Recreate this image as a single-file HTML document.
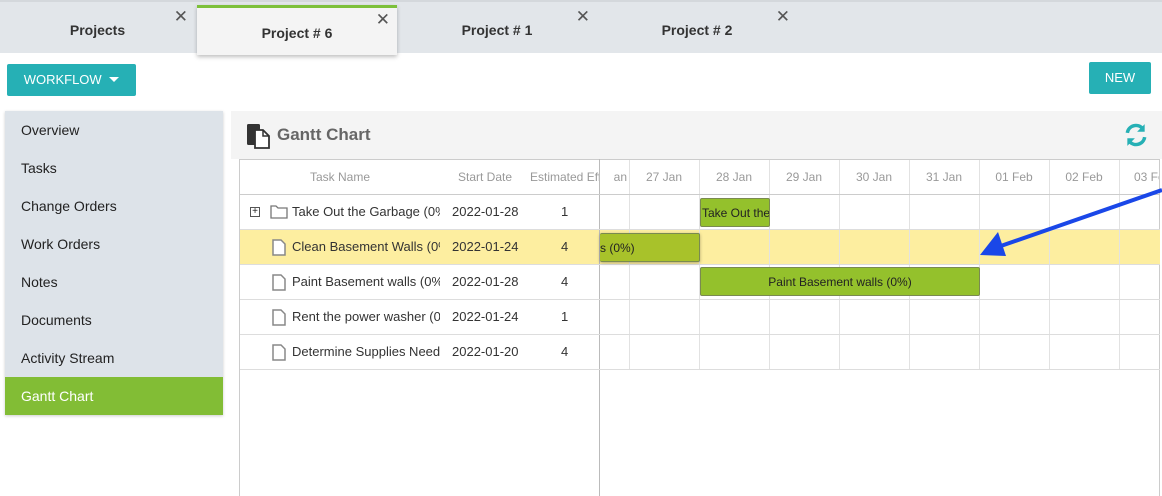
<!DOCTYPE html>
<html><head><meta charset="utf-8"><style>
*{box-sizing:border-box;margin:0;padding:0}
body{width:1162px;height:496px;overflow:hidden;background:#fff;font-family:"Liberation Sans",Arial,sans-serif;position:relative;color:#222}
.abs{position:absolute}
.tabs{left:0;top:0;width:1162px;height:53px;background:#e2e6ea;border-top:2px solid #d4d8dc}
.tab{position:absolute;top:0;height:53px;width:200px;text-align:center;font-size:14px;font-weight:bold;line-height:56px;color:#333}
.x{position:absolute;font-size:17px;font-weight:normal;color:#555;line-height:20px;top:5px}
.act{background:#f4f4f4;border-top:3px solid #7cc03a;top:3px;height:50px;box-shadow:0 2px 4px rgba(0,0,0,.25);line-height:50px}
.btn{background:#26b0b5;color:#fff;font-size:13px;text-align:center;border-radius:2px}
.side{left:5px;top:111px;width:218px;height:304px;background:#dde3e9;box-shadow:0 1px 3px rgba(0,0,0,.2)}
.side div{height:38px;line-height:38px;padding-left:16px;font-size:14px;color:#222}
.hl{position:absolute;height:1px;background:#ddd}
.vl{position:absolute;width:1px;background:#e2e2e2}
.hd{position:absolute;top:159px;height:35px;line-height:36px;font-size:12px;color:#999;text-align:center}
.cell{position:absolute;height:35px;line-height:36px;font-size:13px;color:#333;white-space:nowrap;overflow:hidden}
.bar{position:absolute;height:29px;line-height:29px;font-size:12px;color:#222;border:1px solid #7a8a50;border-radius:2px;text-align:center;white-space:nowrap;overflow:hidden}
.doc{position:absolute;left:272px}
</style></head><body>
<div class="abs tabs">
 <div class="tab" style="left:0;width:195px">Projects<span class="x" style="right:7px">✕</span></div>
 <div class="tab act" style="left:197px">Project # 6<span class="x" style="right:7px;top:2px">✕</span></div>
 <div class="tab" style="left:397px">Project # 1<span class="x" style="right:7px">✕</span></div>
 <div class="tab" style="left:597px">Project # 2<span class="x" style="right:7px">✕</span></div>
</div>
<div class="abs btn" style="left:7px;top:64px;width:129px;height:32px;line-height:32px">WORKFLOW <span style="display:inline-block;border:5px solid transparent;border-top:5px solid #fff;vertical-align:-3px;margin-left:4px"></span></div>
<div class="abs btn" style="left:1089px;top:62px;width:62px;height:32px;line-height:32px">NEW</div>
<div class="abs side">
 <div>Overview</div><div>Tasks</div><div>Change Orders</div><div>Work Orders</div><div>Notes</div><div>Documents</div><div>Activity Stream</div><div style="background:#82bd35;color:#fff">Gantt Chart</div>
</div>
<div class="abs" style="left:231px;top:111px;width:931px;height:48px;background:#f4f4f4"></div>
<svg class="abs" style="left:246px;top:123px" width="26" height="26" viewBox="0 0 26 26"><rect x="1" y="1" width="13" height="21" rx="1.5" fill="#333"/><path d="M9 7h8l6 6v12H9z" fill="#fff" stroke="#333" stroke-width="1.8"/><path d="M17 7v6h6" fill="none" stroke="#333" stroke-width="1.5"/></svg>
<div class="abs" style="left:277px;top:125px;font-size:17px;font-weight:bold;color:#666">Gantt Chart</div>
<svg class="abs" style="left:1123px;top:122px" width="26" height="26" viewBox="0 0 24 24"><path d="M4 10a8 8 0 0 1 14-4" fill="none" stroke="#26b0b5" stroke-width="3.2"/><path d="M20 2v7h-7z" fill="#26b0b5"/><path d="M20 14a8 8 0 0 1-14 4" fill="none" stroke="#26b0b5" stroke-width="3.2"/><path d="M4 22v-7h7z" fill="#26b0b5"/></svg>
<div class="abs" style="left:239px;top:159px;width:921px;height:337px;border-left:1px solid #ccc;border-top:1px solid #ccc;border-right:1px solid #ccc"></div>
<div class="abs" style="left:240px;top:229px;width:920px;height:35px;background:#fdeea0"></div>
<div class="vl" style="left:599px;top:159px;height:337px;background:#bbb"></div>
<div class="vl" style="left:629px;top:160px;height:210px"></div><div class="vl" style="left:699px;top:160px;height:210px"></div><div class="vl" style="left:769px;top:160px;height:210px"></div><div class="vl" style="left:839px;top:160px;height:210px"></div><div class="vl" style="left:909px;top:160px;height:210px"></div><div class="vl" style="left:979px;top:160px;height:210px"></div><div class="vl" style="left:1049px;top:160px;height:210px"></div><div class="vl" style="left:1119px;top:160px;height:210px"></div>
<div class="hl" style="left:240px;top:194px;width:920px;background:#ccc"></div>
<div class="hl" style="left:240px;top:229px;width:920px"></div><div class="hl" style="left:240px;top:264px;width:920px"></div><div class="hl" style="left:240px;top:299px;width:920px"></div><div class="hl" style="left:240px;top:334px;width:920px"></div><div class="hl" style="left:240px;top:369px;width:920px"></div>
<div class="hd" style="left:280px;width:120px">Task Name</div>
<div class="hd" style="left:450px;width:70px">Start Date</div>
<div class="hd" style="left:530px;width:69px;text-align:left;white-space:nowrap;overflow:hidden">Estimated Effort</div>
<div class="hd" style="left:599px;width:30px;text-align:right;padding-right:2px">an</div>
<div class="hd" style="left:629px;width:70px">27 Jan</div><div class="hd" style="left:699px;width:70px">28 Jan</div><div class="hd" style="left:769px;width:70px">29 Jan</div><div class="hd" style="left:839px;width:70px">30 Jan</div><div class="hd" style="left:909px;width:70px">31 Jan</div><div class="hd" style="left:979px;width:70px">01 Feb</div><div class="hd" style="left:1049px;width:70px">02 Feb</div><div class="hd" style="left:1119px;width:40px;text-align:left;padding-left:15px;overflow:hidden;white-space:nowrap">03 Feb</div>
<div class="abs" style="left:250px;top:207px;width:10px;height:10px;border:1px solid #555;font-size:10px;line-height:8px;text-align:center">+</div>
<svg class="abs" style="left:270px;top:204px" width="18" height="15"><path d="M1 2h5l2 2h9v10H1z" fill="none" stroke="#777" stroke-width="1.3"/></svg>
<svg class="doc" style="top:239px" width="14" height="17"><path d="M1 1h8l4 4v11H1z" fill="#fff" stroke="#888" stroke-width="1.5"/></svg>
<svg class="doc" style="top:274px" width="14" height="17"><path d="M1 1h8l4 4v11H1z" fill="#fff" stroke="#888" stroke-width="1.5"/></svg>
<svg class="doc" style="top:309px" width="14" height="17"><path d="M1 1h8l4 4v11H1z" fill="#fff" stroke="#888" stroke-width="1.5"/></svg>
<svg class="doc" style="top:344px" width="14" height="17"><path d="M1 1h8l4 4v11H1z" fill="#fff" stroke="#888" stroke-width="1.5"/></svg>
<div class="cell" style="left:292px;top:194px;width:148px">Take Out the Garbage (0%)</div>
<div class="cell" style="left:292px;top:229px;width:148px">Clean Basement Walls (0%)</div>
<div class="cell" style="left:292px;top:264px;width:148px">Paint Basement walls (0%)</div>
<div class="cell" style="left:292px;top:299px;width:148px">Rent the power washer (0%)</div>
<div class="cell" style="left:292px;top:334px;width:148px">Determine Supplies Needed</div>
<div class="cell" style="left:452px;top:194px">2022-01-28</div><div class="cell" style="left:452px;top:229px">2022-01-24</div><div class="cell" style="left:452px;top:264px">2022-01-28</div><div class="cell" style="left:452px;top:299px">2022-01-24</div><div class="cell" style="left:452px;top:334px">2022-01-20</div>
<div class="cell" style="left:561px;top:194px">1</div><div class="cell" style="left:561px;top:229px">4</div><div class="cell" style="left:561px;top:264px">4</div><div class="cell" style="left:561px;top:299px">1</div><div class="cell" style="left:561px;top:334px">4</div>
<div class="bar" style="left:700px;top:198px;width:70px;background:#94c12c;text-align:left;padding-left:1px">Take Out the Garbage</div>
<div class="bar" style="left:600px;top:233px;width:100px;background:#a8c22a;text-align:left;border-left:none;box-shadow:0 1px 3px rgba(0,0,0,.3)">s (0%)</div>
<div class="bar" style="left:700px;top:267px;width:280px;background:#94c12c">Paint Basement walls (0%)</div>
<svg class="abs" style="left:970px;top:180px" width="192" height="90"><line x1="192" y1="10" x2="25" y2="68" stroke="#1a47e8" stroke-width="4"/><path d="M10 75 L28 52 L36 76 Z" fill="#1a47e8"/></svg>
</body></html>
